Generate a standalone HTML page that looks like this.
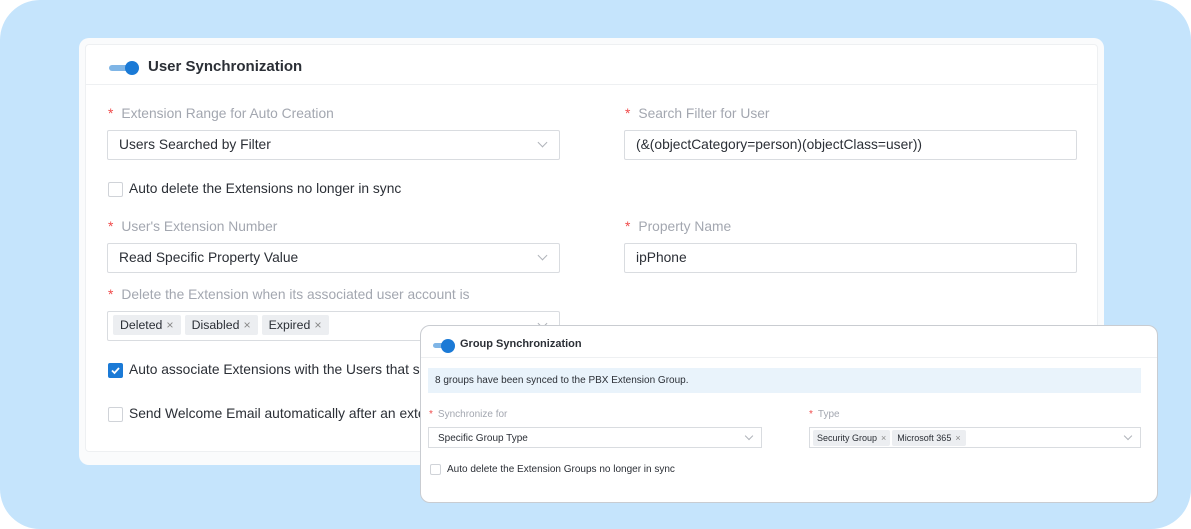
<!DOCTYPE html>
<html><head><style>
*{box-sizing:border-box;margin:0;padding:0}
body{width:1191px;height:529px;background:#fff;font-family:"Liberation Sans",sans-serif;position:relative;overflow:hidden}
.bg{position:absolute;left:0;top:0;width:1191px;height:529px;background:#c5e4fc;border-radius:40px}
.frame{position:absolute;left:79px;top:38px;width:1025px;height:427px;background:#fafbfc;border-radius:10px}
.card{position:absolute;left:85px;top:44px;width:1013px;height:408px;background:#fff;border:1px solid #eef0f2;border-radius:4px}
.abs{position:absolute}
.lbl{position:absolute;font-size:13.8px;color:#a3a7b0}
.lbl b{color:#f04a4a;font-weight:normal;margin-right:8px}
.inp{position:absolute;height:30px;border:1px solid #d9dce0;border-radius:2px;font-size:13.8px;color:#2b2f36;padding:6px 11px;background:#fff}
.chev{position:absolute;right:13px;top:8px;width:7px;height:7px;border-right:1px solid #b0b4ba;border-bottom:1px solid #b0b4ba;transform:rotate(45deg)}
.cb{position:absolute;width:15px;height:15px;border:1px solid #d0d3d8;border-radius:2px;background:#fff}
.txt{position:absolute;font-size:13.8px;color:#2b2f36;white-space:nowrap}
.tag{display:inline-block;background:#eceef1;border-radius:2px;font-size:12.3px;color:#2b2f36;padding:3px 7px;margin-right:4px}
.tag i{font-style:normal;color:#888;margin-left:4px}
.tog{position:absolute;width:30px;height:6px;background:#7fb5e6;border-radius:3px}
.tog:after{content:"";position:absolute;right:0;top:-4px;width:14px;height:14px;border-radius:50%;background:#1b7ad6}
.gp{position:absolute;left:420px;top:325px;width:738px;height:178px;background:#fff;border:1px solid #c9ccd1;border-radius:10px;overflow:hidden}
</style></head><body>
<div class="bg"></div>
<div class="frame"></div>
<div class="card">
 <div class="abs" style="left:0;top:39px;width:1011px;height:1px;background:#eef0f2"></div>
</div>
<div class="tog" style="left:109px;top:65px;width:30px"></div>
<div class="txt" style="left:148px;top:58px;font-size:15px;font-weight:bold;color:#2b2f36">User Synchronization</div>

<div class="lbl" style="left:108px;top:106px"><b>*</b>Extension Range for Auto Creation</div>
<div class="inp" style="left:107px;top:130px;width:453px">Users Searched by Filter<span class="chev"></span></div>
<div class="cb" style="left:108px;top:182px"></div>
<div class="txt" style="left:129px;top:181px">Auto delete the Extensions no longer in sync</div>

<div class="lbl" style="left:625px;top:106px"><b>*</b>Search Filter for User</div>
<div class="inp" style="left:624px;top:130px;width:453px">(&amp;(objectCategory=person)(objectClass=user))</div>

<div class="lbl" style="left:108px;top:219px"><b>*</b>User's Extension Number</div>
<div class="inp" style="left:107px;top:243px;width:453px">Read Specific Property Value<span class="chev"></span></div>
<div class="lbl" style="left:625px;top:219px"><b>*</b>Property Name</div>
<div class="inp" style="left:624px;top:243px;width:453px">ipPhone</div>

<div class="lbl" style="left:108px;top:287px"><b>*</b>Delete the Extension when its associated user account is</div>
<div class="inp" style="left:107px;top:311px;width:453px;padding:3px 5px"><span class="tag">Deleted<i>×</i></span><span class="tag">Disabled<i>×</i></span><span class="tag">Expired<i>×</i></span><span class="chev"></span></div>

<div class="cb" style="left:108px;top:363px;background:#1b7ad6;border-color:#1b7ad6"><svg width="13" height="13" viewBox="0 0 13 13" style="position:absolute;left:0;top:0"><path d="M3 6.5l2.5 2.5 4.5-5" stroke="#fff" stroke-width="1.8" fill="none"/></svg></div>
<div class="txt" style="left:129px;top:362px">Auto associate Extensions with the Users that sh</div>
<div class="cb" style="left:108px;top:407px"></div>
<div class="txt" style="left:129px;top:406px">Send Welcome Email automatically after an exte</div>

<div class="gp">
 <div class="abs" style="left:0;top:31px;width:738px;height:1px;background:#eef0f2"></div>
 <div class="tog" style="left:12px;top:17px;width:22px;height:5px"></div>
 <div class="txt" style="left:39px;top:12px;font-size:11px;font-weight:bold;color:#2b2f36">Group Synchronization</div>
 <div class="abs" style="left:7px;top:42px;width:713px;height:25px;background:#e9f3fb;font-size:10px;color:#2b2f36;padding:7px 7px">8 groups have been synced to the PBX Extension Group.</div>
 <div class="abs" style="left:8px;top:83px;font-size:10px;color:#a3a7b0"><span style="color:#f04a4a;margin-right:5px">*</span>Synchronize for</div>
 <div class="abs" style="left:7px;top:101px;width:334px;height:21px;border:1px solid #d9dce0;font-size:10px;color:#2b2f36;padding:5px 9px">Specific Group Type<span class="chev" style="width:6px;height:6px;top:5px;right:9px"></span></div>
 <div class="abs" style="left:388px;top:83px;font-size:10px;color:#a3a7b0"><span style="color:#f04a4a;margin-right:5px">*</span>Type</div>
 <div class="abs" style="left:388px;top:101px;width:332px;height:21px;border:1px solid #d9dce0;padding:2px 3px;font-size:9px">
  <span class="tag" style="font-size:9px;padding:3px 4px;margin-right:2px">Security Group<i>×</i></span><span class="tag" style="font-size:9px;padding:3px 5px">Microsoft 365<i>×</i></span><span class="chev" style="width:6px;height:6px;top:5px;right:9px"></span></div>
 <div class="cb" style="left:9px;top:138px;width:11px;height:11px"></div>
 <div class="txt" style="left:26px;top:138px;font-size:10px">Auto delete the Extension Groups no longer in sync</div>
</div>
</body></html>
